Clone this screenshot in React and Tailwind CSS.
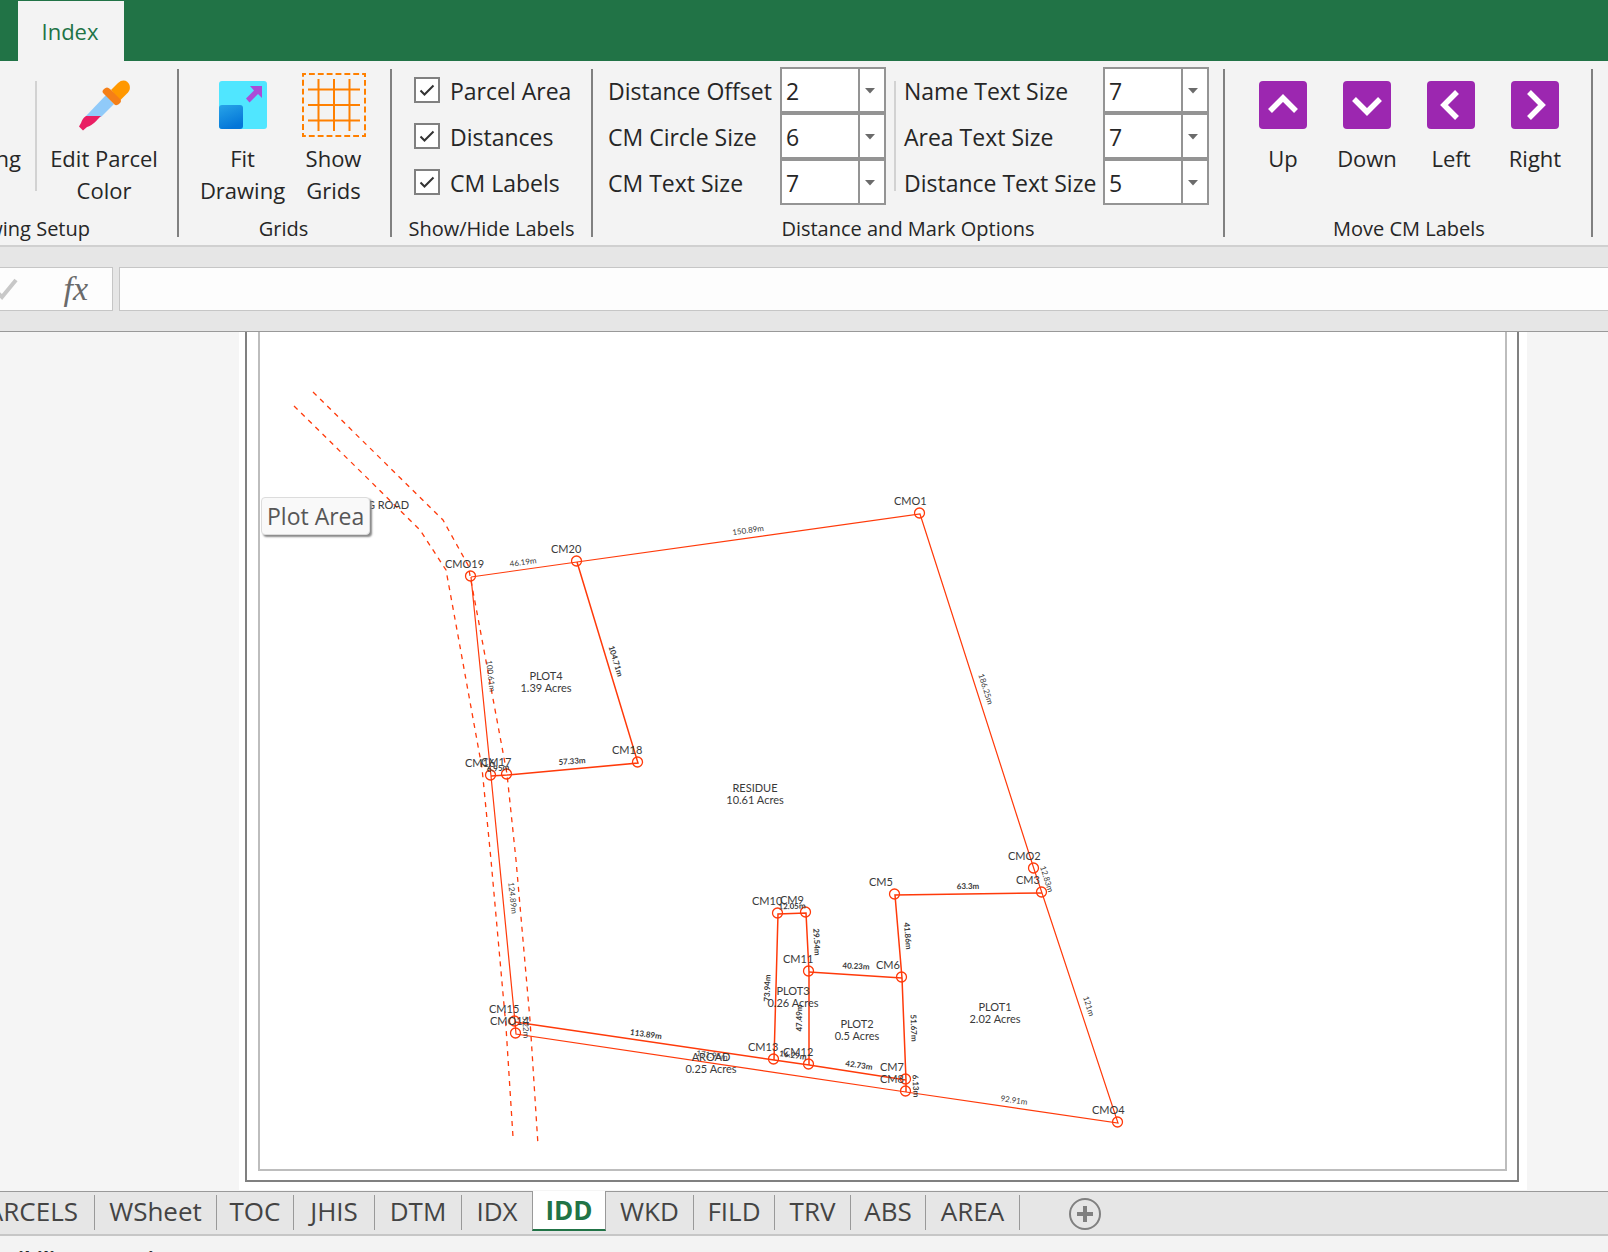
import React from "react";

const RED = "#ff3a0a";

/* Survey marks */
const M = {
  CMO1: [919, 513], CM20: [576, 561], CMO19: [470, 576], CM18: [637, 762],
  CM16: [490, 775], CM17: [506, 774], CM15: [514, 1021], CMO14: [515, 1033],
  CM13: [773, 1059], CM12: [808, 1064], CM11: [808, 971], CM10: [777, 913],
  CM9: [805, 912], CM5: [894, 894], CM6: [901, 977], CM7: [905, 1079],
  CM8: [905, 1091], CMO4: [1117, 1122], CM3: [1041, 892], CMO2: [1033, 868],
};

const THIN = [
  ["CMO19", "CM20", "CMO1", "CMO2", "CM3", "CMO4", "CM8", "CMO14", "CM15"],
  ["CM15", "CM16", "CMO19"],
];
const THICK = [
  ["CM20", "CM18", "CM17", "CM16"],
  ["CM3", "CM5", "CM6", "CM7", "CM8"],
  ["CM15", "CM13", "CM12", "CM7"],
  ["CM13", "CM10", "CM9", "CM11", "CM12"],
  ["CM11", "CM6"],
];

/* text, centre x, centre y, angle, bold */
const DIST = [
  ["46.19m", 523, 562, -8, 0], ["150.89m", 748, 530, -8, 0], ["100.61m", 491, 676, 84, 0],
  ["104.71m", 616, 661, 73, 1], ["57.33m", 572, 761, -4, 1], ["6.95m", 498, 768, -5, 1],
  ["186.25m", 986, 689, 72, 0], ["12.83m", 1047, 879, 72, 0], ["121m", 1089, 1006, 72, 0],
  ["92.91m", 1014, 1100, 8, 0], ["63.3m", 968, 886, -1, 1], ["41.86m", 908, 936, 85, 1],
  ["51.67m", 914, 1028, 88, 1], ["6.13m", 916, 1086, 88, 1], ["40.23m", 856, 966, 3, 1],
  ["42.73m", 859, 1065, 8, 1], ["29.54m", 817, 942, 87, 1], ["12.05m", 792, 906, -2, 1],
  ["73.94m", 767, 988, -88, 1], ["47.49m", 799, 1018, -90, 1], ["16.29m", 793, 1055, 8, 1],
  ["113.89m", 646, 1034, 8, 1], ["171.96m", 712, 1055, 8, 0], ["124.89m", 513, 898, 84, 0],
  ["5.22m", 526, 1027, 88, 0],
];

const AREAS = [
  ["PLOT4", "1.39 Acres", 546, 680], ["RESIDUE", "10.61 Acres", 755, 792],
  ["PLOT1", "2.02 Acres", 995, 1011], ["PLOT2", "0.5 Acres", 857, 1028],
  ["PLOT3", "0.26 Acres", 793, 995], ["AROAD", "0.25 Acres", 711, 1061],
];

const pts = (names) => names.map((n) => `${M[n][0] + 1},${M[n][1] + 1}`).join(" ");

function Drawing() {
  return (
    <svg width="1245" height="837" viewBox="260 332 1245 837" className="block shrink-0 overflow-visible" role="img" aria-label="Parcel plan">
      <g fill="none" stroke={RED}>
        <g strokeWidth="1.3" strokeDasharray="5 5">
          <polyline points="313,392 443,520 468,565 478,618 507,774 516,860 530,1020 538,1145" />
          <polyline points="294,406 420,530 446,570 455,619 482,768 491,860 506,1027 513,1137" />
        </g>
        {THIN.map((l, i) => <polyline key={i} points={pts(l)} strokeWidth="1.2" />)}
        {THICK.map((l, i) => <polyline key={i} points={pts(l)} strokeWidth="1.5" />)}
        {Object.entries(M).map(([n, [x, y]]) => (
          <circle key={n} cx={x + 0.5} cy={y} r="5" strokeWidth="1.3" />
        ))}
      </g>
      <g fill="#3a3a3a" fontFamily="Lato, sans-serif" fontSize="11">
        {Object.entries(M).map(([n, [x, y]]) => (
          <text key={n} x={x - 25} y={y - 8}>{n}</text>
        ))}
        <text x="409" y="509" textAnchor="end">G ROAD</text>
        {AREAS.map(([a, b, x, y]) => (
          <g key={a} textAnchor="middle">
            <text x={x} y={y}>{a}</text>
            <text x={x} y={y + 12}>{b}</text>
          </g>
        ))}
        <g fontSize="8" textAnchor="middle">
          {DIST.map(([t, x, y, r, b]) => (
            <text key={t} x={x} y={y + 3} transform={`rotate(${r} ${x} ${y})`} fontWeight={b ? 700 : 400}>{t}</text>
          ))}
        </g>
      </g>
    </svg>
  );
}

function Separator() {
  return <div className="mt-2 h-[168px] w-0.5 shrink-0 bg-[#808080]" />;
}

function Group({ title, className, children }) {
  return (
    <section className={"flex h-[184px] shrink-0 flex-col " + className}>
      <div className="flex h-[154px] justify-center">{children}</div>
      <h2 className="text-center text-[20px] leading-7 whitespace-nowrap">{title}</h2>
    </section>
  );
}

function BigButton({ icon, lines, className }) {
  return (
    <button type="button" className={"flex flex-col items-center text-[22px] leading-8 whitespace-nowrap " + className}>
      <span className="mt-[7px] flex h-[74px] items-center">{icon}</span>
      {lines.map((l) => <span key={l}>{l}</span>)}
    </button>
  );
}

function Check({ label }) {
  return (
    <label className="flex h-[46px] items-center gap-2.5 text-[23px] whitespace-nowrap">
      <span className="relative block size-[26px] shrink-0">
        <input type="checkbox" defaultChecked className="block size-[26px] appearance-none border-2 border-[#808080] bg-white" />
        <svg className="pointer-events-none absolute inset-0" width="26" height="26" fill="none" stroke="#333" strokeWidth="2">
          <path d="M6.500 13.500l4 4L19.500 8.500" />
        </svg>
      </span>
      <span className="pt-0.5">{label}</span>
    </label>
  );
}

function Combo({ label, value, id }) {
  return (
    <div className="flex h-[46px] items-center justify-between text-[23px] whitespace-nowrap">
      <label htmlFor={id} className="pt-0.5">{label}</label>
      <div className="relative h-[46px] w-[106px]">
        <select id={id} defaultValue={value} className="block h-full w-full appearance-none border-2 border-[#949494] bg-white pt-0.5 pl-1 text-[23px] leading-8">
          <option>{value}</option>
        </select>
        <span className="pointer-events-none absolute top-0.5 right-0.5 bottom-0.5 flex w-[26px] items-center justify-center border-l-2 border-[#949494] pt-0.5 pr-1">
          <svg width="10" height="6" fill="#6b6b6b"><path d="M0 0h10L5 5.500z" /></svg>
        </span>
      </div>
    </div>
  );
}

const Dropper = (
  <svg width="52" height="52" viewBox="0 0 52 52">
    <path d="M28 16L36 25 23 38 8 37z" fill="#90caf9" />
    <path d="M8 37h15C18 42 15 46 9 48L5 51.500 1 47.500 3 44C4 41 5 39 8 37z" fill="#e91e63" />
    <path d="M33 11l7-7c5-5 10-2 11.500 2 1 4 0 6-3 9l-7 7z" fill="#ff9800" />
    <path d="M26 10c2-2 4-2 6 0l9.500 9.500c2 2 2 3 0 5-2 2-4 2-5 1L26 15c-2-2-2-3 0-5z" fill="#f57f17" />
  </svg>
);

const FitIcon = (
  <svg width="48" height="48" viewBox="0 0 48 48">
    <defs>
      <linearGradient id="fit" x1="0" y1="0" x2="0.400" y2="1">
        <stop offset="0" stopColor="#28a4e8" /><stop offset="1" stopColor="#0476d8" />
      </linearGradient>
    </defs>
    <rect width="48" height="48" rx="3" fill="#50e6ff" />
    <rect y="24" width="24" height="24" rx="3" fill="url(#fit)" />
    <path d="M31 5h12v12l-4-4-8.500 8.500-3.500-4 8-8z" fill="#ab4bd8" />
  </svg>
);

const GridIcon = (
  <svg width="64" height="64" viewBox="0 0 64 64" fill="none" stroke="#ff8000" strokeWidth="2">
    <rect x="1" y="1" width="62" height="62" strokeDasharray="5.860 3" strokeDashoffset="2.900" />
    <path d="M16.500 6v52M32 6v52M47.500 6v52M6 16.500h52M6 32h52M6 47.500h52" />
  </svg>
);

function Arrow({ d }) {
  return (
    <svg width="48" height="48" viewBox="0 0 48 48">
      <rect width="48" height="48" rx="4" fill="#9c27b0" />
      <path d={d} fill="none" stroke="#fff" strokeWidth="5.500" />
    </svg>
  );
}

const ARROWS = [
  ["Up", "M11 30L24 17 37 30"], ["Down", "M11 18L24 31 37 18"],
  ["Left", "M30 11L17 24 30 37"], ["Right", "M18 11L31 24 18 37"],
];

/* The tabs beside the active one drop their divider: its border stands there. */
const TABS = [
  ["PARCELS", "w-[95px] justify-end", true], ["WSheet", "w-[122px]", true],
  ["TOC", "w-[77px]", true], ["JHIS", "w-[81px]", true],
  ["DTM", "w-[87px]", true], ["IDX", "w-[70px]", false],
  ["IDD", "", false], ["WKD", "w-[88px]", true], ["FILD", "w-[81px]", true],
  ["TRV", "w-[76px]", true], ["ABS", "w-[75px]", true],
  ["AREA", "w-[94px]", true],
];

export default function App() {
  return (
    <div className="flex h-screen flex-col overflow-hidden bg-[#f3f3f3] text-[#262626]" style={{ fontFamily: '"Open Sans", sans-serif' }}>
      <header className="h-[61px] shrink-0 bg-[#217346] pt-px pl-[18px]">
        <button type="button" className="h-[60px] w-[106px] bg-[#f3f3f3] pr-0.5 text-[22px] text-[#217346]">Index</button>
      </header>

      <div className="flex h-[186px] shrink-0 overflow-hidden border-b-2 border-[#d0d0d0]">
        <Group title={<span className="float-right mr-[87px]">Drawing Setup</span>} className="w-[177px]">
          <div className="flex w-[35px] shrink-0 justify-end pt-[81px] pr-3.5 text-[22px] leading-8 whitespace-nowrap">Drawing</div>
          <div className="mt-5 h-[110px] w-0.5 shrink-0 bg-[#d2d2d2]" />
          <BigButton icon={Dropper} lines={["Edit Parcel", "Color"]} className="mr-1.5 w-[134px]" />
        </Group>
        <Separator />
        <Group title="Grids" className="w-[211px] pr-0.5">
          <BigButton icon={FitIcon} lines={["Fit", "Drawing"]} className="w-[100px]" />
          <BigButton icon={GridIcon} lines={["Show", "Grids"]} className="w-[82px]" />
        </Group>
        <Separator />
        <Group title="Show/Hide Labels" className="w-[199px]">
          <div className="w-full pt-1.5 pl-[22px]">
            <Check label="Parcel Area" />
            <Check label="Distances" />
            <Check label="CM Labels" />
          </div>
        </Group>
        <Separator />
        <Group title="Distance and Mark Options" className="w-[630px]">
          <div className="ml-px w-[278px] pt-1.5">
            <Combo id="offset" label="Distance Offset" value="2" />
            <Combo id="circle" label="CM Circle Size" value="6" />
            <Combo id="cmtext" label="CM Text Size" value="7" />
          </div>
          <div className="mx-2 mt-5 h-[110px] w-0.5 bg-[#d2d2d2]" />
          <div className="w-[305px] pt-1.5">
            <Combo id="name" label="Name Text Size" value="7" />
            <Combo id="area" label="Area Text Size" value="7" />
            <Combo id="dist" label="Distance Text Size" value="5" />
          </div>
        </Group>
        <Separator />
        <Group title="Move CM Labels" className="w-[366px] pl-0.5">
          {ARROWS.map(([l, d]) => <BigButton key={l} icon={<Arrow d={d} />} lines={[l]} className="w-[84px]" />)}
        </Group>
        <Separator />
      </div>

      <div className="flex h-[85px] shrink-0 gap-1.5 border-b border-[#999] bg-[#e6e6e6] pt-5">
        <div className="flex h-11 w-[113px] shrink-0 items-center justify-between border border-l-0 border-[#c6c6c6] bg-[#fdfdfd] pr-6">
          <button type="button" aria-label="Enter">
            <svg width="18" height="24" fill="none" stroke="#c8c8c8" strokeWidth="4"><path d="M-4 14l6 6L16 3" /></svg>
          </button>
          <button type="button" className="text-[34px] leading-10 text-[#6a6a6a] italic" style={{ fontFamily: '"Liberation Serif", serif' }}>fx</button>
        </div>
        <input aria-label="Formula bar" className="h-11 min-w-0 flex-1 border border-r-0 border-[#c6c6c6] bg-[#fdfdfd] px-2 text-[22px]" />
      </div>

      <main className="relative flex min-h-0 flex-1 overflow-hidden bg-[#f5f5f5] pr-[81px] pl-[239px]">
        <div className="mb-px flex min-w-0 flex-1 bg-white px-1.5 pr-2 pb-2">
          <div className="flex min-w-0 flex-1 border-2 border-t-0 border-[#808080] px-[11px] pr-2.5 pb-[9px]">
            <div className="min-w-0 flex-1 border-2 border-t-0 border-[#bdbdbd]">
              <Drawing />
            </div>
          </div>
        </div>
        <div role="tooltip" className="absolute top-[165px] left-[261px] rounded border border-[#dcdcdc] bg-[#f9f9f9] px-[5px] text-[23px] leading-9 text-[#575757] shadow-[2px_2px_2px_#888]">Plot Area</div>
      </main>

      <nav className="flex h-[45px] shrink-0 overflow-hidden border-b-2 border-[#c6c6c6] bg-[#e6e6e6] text-[26px] whitespace-nowrap text-[#444]">
        {TABS.map(([t, c, divider]) =>
          t === "IDD" ? (
            <button key={t} type="button" className="h-10 w-[74px] shrink-0 border-x border-b-2 border-x-[#999] border-b-[#217346] bg-white font-bold text-[#217346]">{t}</button>
          ) : (
            <div key={t} className={"flex shrink-0 border-t border-[#999] " + c}>
              <button type="button" className={t === "PARCELS" ? "h-9 shrink-0 pr-4" : "h-9 flex-1"}>{t}</button>
              {divider && <span className="mt-[3px] h-[35px] w-px shrink-0 bg-[#999]" />}
            </div>
          )
        )}
        <div className="flex flex-1 border-t border-[#999] pt-1.5 pl-[49px]">
          <button type="button" aria-label="New sheet" className="size-8">
            <svg width="32" height="32" fill="none" stroke="#808080"><circle cx="16" cy="16" r="15" strokeWidth="2" /><path d="M16 8v16M8 16h16" strokeWidth="4" /></svg>
          </button>
        </div>
      </nav>
      <footer className="h-4 shrink-0 overflow-hidden pt-2">
        <p className="-ml-12 text-[20px] font-bold whitespace-nowrap">Accessibility: Investigate</p>
      </footer>
    </div>
  );
}
